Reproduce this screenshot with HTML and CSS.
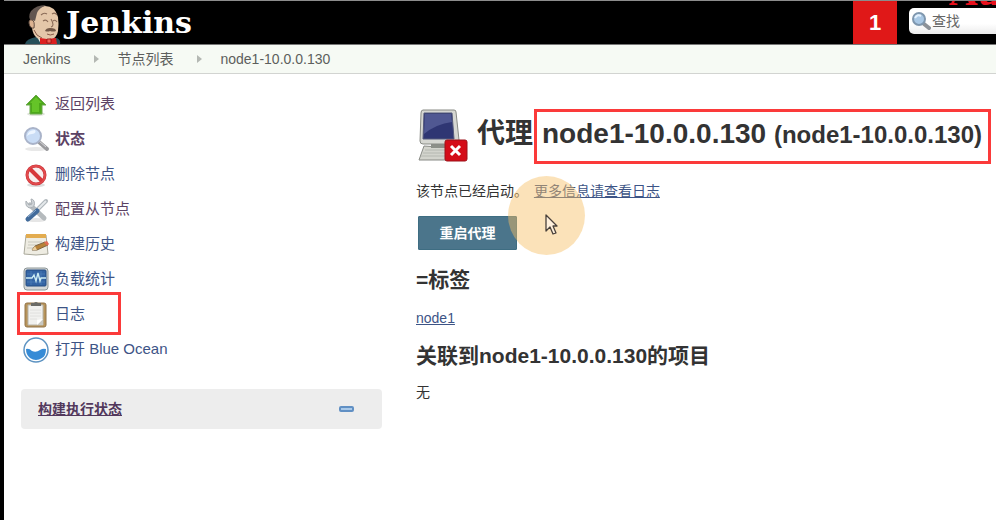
FILE: index.html
```html
<!DOCTYPE html>
<html lang="zh-CN">
<head>
<meta charset="utf-8">
<title>node1-10.0.0.130 [Jenkins]</title>
<link rel="stylesheet" href="styles.css">
</head>
<body>
<header class="header">
  <a class="brand" href="#">
    <svg class="brand-face" width="38" height="40" viewBox="0 0 38 40" aria-hidden="true">
      <path d="M0 40Q1 35 11 33L32 34Q36 36 35 40Z" fill="#254e58"/>
      <path d="M11 31l3-3 10 8-8 4z" fill="#ece9e2"/>
      <path d="M7 24Q8 31 12 34Q18 38 25 36Q32 34 33 27Q34 20 33 13Q30 2 20 2Q9 3 7 13Z" fill="#e4c7a9"/>
      <path d="M7 19Q2 13 6 7Q11 1 21 1Q14 4 12 9Q11 13 10 17L7 16Z" fill="#625650"/>
      <path d="M4 19Q4 15 7 16Q10 17 9 24Q5 25 4 19Z" fill="#dcb391" stroke="#655044" stroke-width="1"/>
      <path d="M16 11Q19 8 22 10M27 10Q30 8 32 11M18 17Q21 15 23 18M28 17Q30 15 32 18M26 15Q30 22 26 23" fill="none" stroke="#8b6c58" stroke-width="1.1"/>
      <path d="M20 27Q21 24 25 24Q31 24 31 27Q28 28 25 27Q23 28 20 27Z" fill="#725847"/>
      <path d="M22 30Q25 32 29 30M9 26Q11 32 17 34" fill="none" stroke="#8a5c49" stroke-width="1"/>
      <path d="M15 34L22 35L31 34L32 40H15Z" fill="#dc2020"/>
      <path d="M22 35h4v4h-4z" fill="#f25a50" stroke="#801010" stroke-width=".7"/>
    </svg>
    <span class="brand-name">Jenkins</span>
  </a>
  <a class="alert-count" href="#">1</a>
  <form class="search" role="search">
    <svg width="20" height="20" viewBox="0 0 20 20" aria-hidden="true">
      <path d="M13 13l5 4" stroke="#8d9298" stroke-width="4" stroke-linecap="round"/>
      <circle cx="8" cy="8" r="6" fill="#a9c8e5" stroke="#7f97ae" stroke-width="2"/>
      <path d="M4 7Q6 3 10 5" stroke="#e3f2ff" stroke-width="2" fill="none"/>
    </svg>
    <input class="search-input" type="text" placeholder="查找" aria-label="查找">
  </form>
  <span class="watermark">Au</span>
</header>

<nav class="crumbs" aria-label="导航">
  <a href="#">Jenkins</a>
  <i class="crumb-arrow"></i>
  <a href="#">节点列表</a>
  <i class="crumb-arrow"></i>
  <a href="#">node1-10.0.0.130</a>
</nav>

<div class="page">
  <aside class="side">
    <nav class="tasks">
      <a class="task visited" href="#">
        <svg width="28" height="28" viewBox="0 0 28 28" aria-hidden="true">
          <ellipse cx="14" cy="24" rx="9" ry="2" fill="#e0e4dc"/>
          <path d="M14 5L24 15h-4v9H8v-9H4z" fill="#4da81a" stroke="#6aa94b"/>
          <path d="M14 7l6 6h-3v9h-7v-9H8z" fill="#65c428"/>
        </svg>返回列表</a>
      <a class="task visited current" href="#">
        <svg width="28" height="28" viewBox="0 0 28 28" aria-hidden="true">
          <ellipse cx="14" cy="24" rx="11" ry="2" fill="#e8e8e8"/>
          <path d="M17 17l8 7" stroke="#9a9a9d" stroke-width="4" stroke-linecap="round"/>
          <path d="M17 16l7 6" stroke="#d8d8dc" stroke-width="1"/>
          <circle cx="11" cy="11" r="8" fill="#c9dcf5" stroke="#a9b3c9" stroke-width="2"/>
          <path d="M5 11Q6 5 13 5Q15 8 10 9Q7 9 5 11Z" fill="#edf5ff"/>
        </svg>状态</a>
      <a class="task" href="#">
        <svg width="28" height="28" viewBox="0 0 28 28" aria-hidden="true">
          <ellipse cx="14" cy="25" rx="9" ry="2" fill="#ddd"/>
          <circle cx="14" cy="15" r="9" fill="#f8eeee" stroke="#c8343a" stroke-width="3"/>
          <circle cx="14" cy="15" r="9" fill="none" stroke="#e34b4d" stroke-width="2"/>
          <path d="M8 9l12 12" stroke="#d7373b" stroke-width="4"/>
        </svg>删除节点</a>
      <a class="task visited" href="#">
        <svg width="28" height="28" viewBox="0 0 28 28" aria-hidden="true">
          <ellipse cx="14" cy="25" rx="10" ry="2" fill="#e6e6e6"/>
          <path d="M8 10l14 13" stroke="#b5babd" stroke-width="5" stroke-linecap="round"/>
          <path d="M4 6Q3 12 8 13Q14 12 12 6Q11 4 9 4L10 9L7 10Z" fill="#d1d5d8" stroke="#aab0b5"/>
          <path d="M24 6L16 14" stroke="#aeb5ba" stroke-width="4" stroke-linecap="round"/>
          <path d="M24 6L16 14" stroke="#e5e9eb" stroke-width="2"/>
          <path d="M15 16L6 24" stroke="#426b9b" stroke-width="5" stroke-linecap="round"/>
          <path d="M14 15L6 22" stroke="#91afd0" stroke-width="1"/>
        </svg>配置从节点</a>
      <a class="task" href="#">
        <svg width="28" height="28" viewBox="0 0 28 28" aria-hidden="true">
          <path d="M4 5h20l2 19q-12 2-24 0z" fill="#eeece2" stroke="#aaa99b"/>
          <path d="M4 4h20v4H4z" fill="#e3ac4f"/>
          <path d="M6 12h14M6 15h12M5 18h9" stroke="#c9c8bd"/>
          <path d="M10 20l3-4 10-4 3 3-11 5z" fill="#b78238" stroke="#7e6543"/>
          <path d="M22 12l3-1 2 3-2 2z" fill="#df6c54"/>
          <path d="M10 20l3-4 2 4z" fill="#edcf9c"/>
        </svg>构建历史</a>
      <a class="task" href="#">
        <svg width="28" height="28" viewBox="0 0 28 28" aria-hidden="true">
          <rect x="2" y="3" width="24" height="22" rx="3" fill="#d5d8d8" stroke="#8d9697"/>
          <rect x="4" y="5" width="20" height="16" rx="1" fill="#3464a4" stroke="#254d81"/>
          <path d="M5 9h18M5 17h18M9 6v14M19 6v14" stroke="#5283bb" stroke-width=".7"/>
          <path d="M4 13h6l2-3 2 6 2-8 2 8 1-3h5" fill="none" stroke="#ccecf3" stroke-width="1.4"/>
        </svg>负载统计</a>
      <a class="task marked" href="#">
        <svg width="28" height="28" viewBox="0 0 28 28" aria-hidden="true">
          <rect x="3" y="3" width="21" height="24" rx="2" fill="#b8945a" stroke="#92744a"/>
          <path d="M6 5h15v20H6z" fill="#f1f1ef" stroke="#b8b5aa"/>
          <path d="M8 10h11M8 13h11M8 16h11M8 19h7" stroke="#e0e0de"/>
          <path d="M9 6V3h3q2-2 4 0h3v3z" fill="#6b6b67"/>
          <path d="M21 19l-6 6h6z" fill="#c8c8c2"/><path d="M15 25v-5l6-1z" fill="#fff"/>
        </svg>日志</a>
      <a class="task" href="#">
        <svg width="28" height="28" viewBox="0 0 28 28" aria-hidden="true">
          <circle cx="14" cy="15" r="12" fill="#fff" stroke="#5d93c2" stroke-width="1.5"/>
          <path d="M4 14Q7 13 10 16Q14 18 18 15Q21 13 24 14Q24 21 20 23Q14 27 8 23Q4 20 4 14Z" fill="#368bd6"/>
        </svg>打开 Blue Ocean</a>
    </nav>
    <section class="executors">
      <a class="executors-title" href="#">构建执行状态</a>
      <button class="collapse" type="button" aria-label="折叠"></button>
    </section>
  </aside>

  <main class="main">
    <h1 class="title">
      <svg class="computer" width="52" height="56" viewBox="0 0 52 56" aria-hidden="true">
        <path d="M8 38L39 40L43 52H3Z" fill="#d3d4cd" stroke="#888a85"/>
        <path d="M9 42h24M7 45h25M5 48h26" stroke="#c0c1ba" stroke-width="1.5"/>
        <path d="M15 35h17v5H15z" fill="#8c8f88"/>
        <path d="M7 2H38Q40 2 40 4L43 32Q43 36 39 36H7Q4 36 4 33L5 5Q5 2 7 2Z" fill="#d6d7d2" stroke="#888a85"/>
        <path d="M8 5H36L38 31H7Z" fill="#2f3673" stroke="#555a7c"/>
        <path d="M9 6H35L36 14Q20 16 8 26Z" fill="#505892"/>
        <rect x="29" y="32" width="22" height="21" rx="2" fill="#d40c18" stroke="#9c1118"/>
        <path d="M35 38l9 9m0-9l-9 9" stroke="#fff" stroke-width="3"/>
      </svg>
      <span>代理</span>
      <span class="node-name">node1-10.0.0.130 <small>(node1-10.0.0.130)</small></span>
    </h1>
    <p class="status">该节点已经启动。 <a class="log-link" href="#">更多信息请查看日志</a></p>
    <button class="launch" type="button">重启代理</button>
    <h2>=标签</h2>
    <p><a href="#">node1</a></p>
    <h2>关联到node1-10.0.0.130的项目</h2>
    <p>无</p>
    <div class="pointer">
      <svg width="14" height="22" viewBox="0 0 14 22" aria-hidden="true">
        <path d="M2 1v16l4-4 3 7 3-1-3-7h4z" fill="#fff0dc" stroke="#49413b" stroke-width="1.3" stroke-linejoin="round"/>
      </svg>
    </div>
  </main>
</div>
</body>
</html>
```
FILE: styles.css
```css
*, *::before, *::after { box-sizing: border-box; }

body {
  margin: 0;
  min-height: 100vh;
  border-left: 4px solid #000;
  background: #fff;
  color: #333;
  font: 14px/20px "Liberation Sans", "Noto Sans CJK SC", sans-serif;
}

a { color: #3d5486; }

.header {
  position: relative;
  display: flex;
  height: 45px;
  overflow: hidden;
  border-top: 1px solid #8c8c8c;
  border-bottom: 1px solid #777;
  background: #000;
}

.brand {
  display: flex;
  flex: 1;
  align-items: flex-end;
  gap: 3px;
  padding-left: 21px;
  color: #fff;
  text-decoration: none;
}

.brand-face { display: block; }

.brand-name {
  align-self: center;
  font: bold 30px/40px "DejaVu Serif", serif;
}

.alert-count {
  display: grid;
  place-items: center;
  width: 44px;
  background: #e01818;
  color: #fff;
  font-size: 22px;
  font-weight: bold;
  text-decoration: none;
}

.search {
  display: flex;
  align-items: center;
  align-self: flex-start;
  width: 87px;
  height: 26px;
  margin: 7px 0 0 12px;
  padding-left: 2px;
  border-radius: 5px 0 0 5px;
  background: linear-gradient(#fff 60%, #ececec);
}

.search svg { flex: none; }

.search-input {
  width: 100%;
  min-width: 0;
  padding: 0 0 0 1px;
  border: 0;
  background: none;
  color: #555;
  font: inherit;
}

.search-input::placeholder { color: #666; }

.watermark {
  position: absolute;
  top: -29px;
  right: -4px;
  color: #e8101c;
  font: bold 40px/40px "Liberation Serif", serif;
}

.crumbs {
  display: flex;
  align-items: center;
  height: 29px;
  padding-left: 19px;
  border-bottom: 1px solid #d2d4d1;
  background: #f6faf4;
}

.crumbs a {
  color: #5d5f5d;
  text-decoration: none;
}

.crumb-arrow {
  width: 5px;
  margin: 0 18px 0 24px;
  border: solid transparent;
  border-width: 4px 0 4px 5px;
  border-left-color: #b4b8b3;
}

.page {
  display: flex;
  gap: 34px;
  padding: 12px 0 0 17px;
}

.side { flex: 0 0 361px; }

.task {
  position: relative;
  display: flex;
  align-items: center;
  gap: 5px;
  width: fit-content;
  height: 35px;
  padding-left: 1px;
  font-size: 15px;
  text-decoration: none;
}

.visited { color: #5c4264; }
.current { font-weight: bold; }

.marked::after {
  content: "";
  position: absolute;
  inset: -4px auto auto -4px;
  width: 104px;
  height: 43px;
  border: 3px solid #fb3a3a;
}

.executors {
  display: flex;
  align-items: center;
  justify-content: space-between;
  height: 40px;
  margin-top: 23px;
  padding: 0 28px 0 17px;
  border-radius: 4px;
  background: #ededed;
}

.executors-title {
  color: #52385c;
  font-weight: bold;
}

.collapse {
  width: 15px;
  height: 6px;
  padding: 0;
  border: 2px solid #6190c4;
  border-radius: 2px;
  background: #a9c9e9;
}

.main {
  position: relative;
  flex: 1;
  min-width: 0;
  padding-top: 18px;
}

.title {
  display: flex;
  align-items: flex-start;
  height: 60px;
  margin: 0;
  font-size: 28px;
  line-height: 60px;
  white-space: nowrap;
}

.computer {
  flex: none;
  margin: 4px 9px 0 0;
}

.node-name {
  position: relative;
  margin-left: 9px;
}

.node-name small { font-size: 24px; }

.node-name::after {
  content: "";
  position: absolute;
  top: 5px;
  right: -9px;
  left: -8px;
  height: 55px;
  border: 3px solid #fb3a3a;
}

p { margin: 0; }

.status { margin: 17px 0 15px; }
.log-link { margin-left: 2px; }

.launch {
  display: block;
  width: 99px;
  height: 34px;
  margin-left: 2px;
  border: 1px solid #3e6d82;
  border-radius: 1px;
  background: #4b758b;
  color: #fff;
  font: inherit;
  font-weight: bold;
}

h2 {
  margin: 14px 0 12px;
  font-size: 21px;
  line-height: 32px;
}

p + h2 { margin: 12px 0 10px; }

.pointer {
  position: absolute;
  top: 90px;
  left: 92px;
  display: grid;
  place-items: center;
  width: 77px;
  height: 79px;
  border-radius: 50%;
  background: rgb(247 190 99 / 45%);
}

.pointer svg { margin: 18px 0 0 8px; }
```
